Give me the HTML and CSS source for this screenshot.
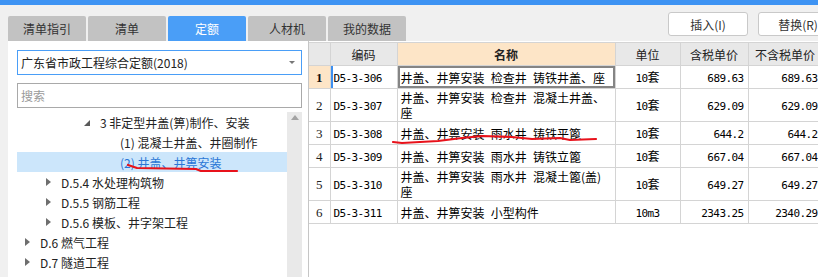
FILE: index.html
```html
<!DOCTYPE html>
<html lang="zh-CN">
<head>
<meta charset="utf-8">
<title>定额</title>
<link rel="stylesheet" href="styles.css">
</head>
<body>
<div class="app">
  <div class="topbar"></div>
  <div class="toolbar">
    <div class="tabs">
      <div class="tab">清单指引</div>
      <div class="tab">清单</div>
      <div class="tab active">定额</div>
      <div class="tab">人材机</div>
      <div class="tab">我的数据</div>
    </div>
    <div class="actions">
      <button class="btn">插入(I)</button>
      <button class="btn">替换(R)</button>
    </div>
  </div>
  <div class="main">
    <div class="side">
      <div class="select"><span>广东省市政工程综合定额(2018)</span><span class="caret"></span></div>
      <div class="search">搜索</div>
      <div class="treewrap">
        <div class="tree">
          <div class="row l2"><span class="tw open"></span><span>3 非定型井盖(箅)制作、安装</span></div>
          <div class="row l3"><span class="tw"></span><span>(1) 混凝土井盖、井圈制作</span></div>
          <div class="row l3 sel"><span class="tw"></span><span>(2) 井盖、井箅安装</span></div>
          <div class="row l1"><span class="tw shut"></span><span>D.5.4 水处理构筑物</span></div>
          <div class="row l1"><span class="tw shut"></span><span>D.5.5 钢筋工程</span></div>
          <div class="row l1"><span class="tw shut"></span><span>D.5.6 模板、井字架工程</span></div>
          <div class="row l0"><span class="tw shut"></span><span>D.6 燃气工程</span></div>
          <div class="row l0"><span class="tw shut"></span><span>D.7 隧道工程</span></div>
        </div>
        <div class="vscroll"><span class="up"></span></div>
      </div>
    </div>
    <div class="grid">
      <table class="tbl">
        <colgroup>
          <col class="c-no"><col class="c-code"><col class="c-name"><col class="c-unit"><col class="c-price"><col class="c-price2">
        </colgroup>
        <thead>
          <tr>
            <th class="no"></th>
            <th>编码</th>
            <th class="hl">名称</th>
            <th>单位</th>
            <th>含税单价</th>
            <th>不含税单价</th>
          </tr>
        </thead>
        <tbody>
          <tr class="r1">
            <td class="no cur">1</td>
            <td class="code focus"><span class="mono">D5-3-306</span></td>
            <td class="name edit">井盖、井箅安装 检查井 铸铁井盖、座</td>
            <td class="unit"><span class="mono">10</span>套</td>
            <td class="num"><span class="mono">689.63</span></td>
            <td class="num"><span class="mono">689.63</span></td>
          </tr>
          <tr class="r2">
            <td class="no">2</td>
            <td class="code"><span class="mono">D5-3-307</span></td>
            <td class="name">井盖、井箅安装 检查井 混凝土井盖、座</td>
            <td class="unit"><span class="mono">10</span>套</td>
            <td class="num"><span class="mono">629.09</span></td>
            <td class="num"><span class="mono">629.09</span></td>
          </tr>
          <tr class="r1">
            <td class="no">3</td>
            <td class="code"><span class="mono">D5-3-308</span></td>
            <td class="name">井盖、井箅安装 雨水井 铸铁平篦</td>
            <td class="unit"><span class="mono">10</span>套</td>
            <td class="num"><span class="mono">644.2</span></td>
            <td class="num"><span class="mono">644.2</span></td>
          </tr>
          <tr class="r1">
            <td class="no">4</td>
            <td class="code"><span class="mono">D5-3-309</span></td>
            <td class="name">井盖、井箅安装 雨水井 铸铁立篦</td>
            <td class="unit"><span class="mono">10</span>套</td>
            <td class="num"><span class="mono">667.04</span></td>
            <td class="num"><span class="mono">667.04</span></td>
          </tr>
          <tr class="r2">
            <td class="no">5</td>
            <td class="code"><span class="mono">D5-3-310</span></td>
            <td class="name">井盖、井箅安装 雨水井 混凝土篦(盖)座</td>
            <td class="unit"><span class="mono">10</span>套</td>
            <td class="num"><span class="mono">649.27</span></td>
            <td class="num"><span class="mono">649.27</span></td>
          </tr>
          <tr class="r1">
            <td class="no">6</td>
            <td class="code"><span class="mono">D5-3-311</span></td>
            <td class="name">井盖、井箅安装 小型构件</td>
            <td class="unit"><span class="mono">10m3</span></td>
            <td class="num"><span class="mono">2343.25</span></td>
            <td class="num"><span class="mono">2340.29</span></td>
          </tr>
        </tbody>
      </table>
    </div>
  </div>
  <svg class="marks" width="840" height="277" viewBox="0 0 840 277">
    <path d="M128 165 L137 168 L196 169 L201 171 L237 171"/>
    <path d="M393 142 L402 143 L438 141 L462 138 L482 136 L512 137 L532 139 L560 138 L570 140 L596 139"/>
  </svg>
</div>
</body>
</html>
```

FILE: styles.css
```css
html, body {
  margin: 0;
  padding: 0;
  width: 818px;
  height: 277px;
  overflow: hidden;
  background: #f0f0f0;
}

.app {
  position: relative;
  width: 840px;
  height: 277px;
  font-family: "Noto Sans CJK SC", "Noto Sans", sans-serif;
  font-size: 12px;
  color: #222;
}

.topbar {
  height: 5px;
  background: #3d93f3;
}

.toolbar {
  display: flex;
  align-items: flex-start;
  height: 36px;
  padding-left: 8px;
}

.tabs {
  display: flex;
  gap: 2px;
  margin-top: 11px;
}

.tab {
  width: 78px;
  height: 25px;
  display: flex;
  align-items: center;
  justify-content: center;
  background: #c2c2c2;
  border-radius: 2px 2px 0 0;
  color: #333;
  font-size: 12px;
}

.tab.active {
  background: #4a9ef7;
  color: #fff;
}

.actions {
  display: flex;
  gap: 10px;
  margin-left: auto;
  margin-top: 7px;
  padding-right: 2px;
}

.btn {
  width: 80px;
  height: 24px;
  box-sizing: border-box;
  border: 1px solid #c9c9c9;
  border-radius: 3px;
  background: #fff;
  color: #333;
  font-family: inherit;
  font-size: 12px;
  padding: 0;
}

.main {
  display: flex;
  height: 236px;
}

.side {
  width: 300px;
  margin-left: 8px;
  box-sizing: border-box;
  padding: 9px 6px 0 9px;
  background: #fff;
  display: flex;
  flex-direction: column;
}

.select {
  height: 25px;
  box-sizing: border-box;
  border: 1px solid #4a9ef7;
  display: flex;
  align-items: center;
  padding: 0 6px 0 3px;
  color: #222;
}

.caret {
  margin-left: auto;
  width: 0;
  height: 0;
  border-left: 3px solid transparent;
  border-right: 3px solid transparent;
  border-top: 3px solid #777;
}

.search {
  margin-top: 8px;
  height: 25px;
  box-sizing: border-box;
  border: 1px solid #a9a9a9;
  display: flex;
  align-items: center;
  padding-left: 3px;
  color: #9a9a9a;
}

.treewrap {
  margin-top: 4px;
  flex: 1;
  display: flex;
  overflow: hidden;
}

.tree {
  flex: 1;
}

.row {
  height: 20px;
  display: flex;
  align-items: center;
  white-space: nowrap;
  color: #222;
}

.row.sel {
  background: #cce6fb;
  color: #2a76d6;
}

.l0 { padding-left: 3px; }
.l1 { padding-left: 24px; }
.l2 { padding-left: 63px; }
.l3 { padding-left: 83px; }

.tw {
  width: 14px;
  height: 20px;
  margin-right: 6px;
  display: flex;
  align-items: center;
  justify-content: center;
}

.tw.shut::before {
  content: "";
  width: 0;
  height: 0;
  border-left: 5px solid #6e6e6e;
  border-top: 4px solid transparent;
  border-bottom: 4px solid transparent;
}

.tw.open::before {
  content: "";
  width: 0;
  height: 0;
  margin-top: 1px;
  border-bottom: 6px solid #5a5a5a;
  border-left: 6px solid transparent;
}

.vscroll {
  width: 15px;
  background: #e9e9e9;
  display: flex;
  justify-content: center;
}

.up {
  margin-top: 3px;
  width: 0;
  height: 0;
  border-left: 4px solid transparent;
  border-right: 4px solid transparent;
  border-bottom: 5px solid #a3a3a3;
}

.grid {
  flex: none;
  width: 531px;
  background: #fff;
  border-left: 1px solid #c6c6c6;
  padding-top: 1px;
}

.tbl {
  border-collapse: collapse;
  table-layout: fixed;
  width: 513px;
}

.c-no { width: 21px; }
.c-code { width: 67px; }
.c-name { width: 218px; }
.c-unit { width: 65px; }
.c-price { width: 68px; }
.c-price2 { width: 74px; }

.tbl th,
.tbl td {
  border: 1px solid #d4d4d4;
  padding: 0;
  overflow: hidden;
  white-space: nowrap;
}

.tbl tr > :first-child {
  border-left: none;
}

.tbl th {
  height: 22px;
  background: #e8e8e8;
  font-weight: normal;
  font-size: 12px;
  color: #222;
  text-align: center;
  border-top: 1px solid #d4d4d4;
}

.tbl th.hl {
  background: #fde5c7;
  font-weight: bold;
}

.tbl td {
  font-size: 12px;
  line-height: 15px;
  color: #000;
  vertical-align: middle;
}

.tbl tr.r1 td { height: 22px; }
.tbl tr.r2 td { height: 32px; }

.mono {
  font-family: "DejaVu Sans Mono", monospace;
  font-size: 11px;
  letter-spacing: -0.6px;
}

.tbl td.no {
  text-align: center;
  font-family: "Liberation Serif", serif;
  font-size: 13px;
  color: #222;
}

.tbl td.no.cur {
  background: #fde5c7;
  font-weight: bold;
  color: #111;
}

.tbl td.code {
  padding-left: 3px;
}

.tbl td.focus {
  box-shadow: inset 2px 0 0 #3d8ff0;
}

.tbl td.name {
  white-space: normal;
  padding: 0 6px 0 3px;
  word-spacing: 3.5px;
}

.tbl td.edit {
  box-shadow: inset 0 0 0 2px #858585;
}

.tbl td.unit {
  text-align: center;
}

.tbl td.num {
  text-align: right;
  padding-right: 4px;
}

.marks {
  position: absolute;
  left: 0;
  top: 0;
  pointer-events: none;
}

.marks path {
  fill: none;
  stroke: #e8121b;
  stroke-width: 2.2;
  stroke-linejoin: round;
  stroke-linecap: round;
}
```
